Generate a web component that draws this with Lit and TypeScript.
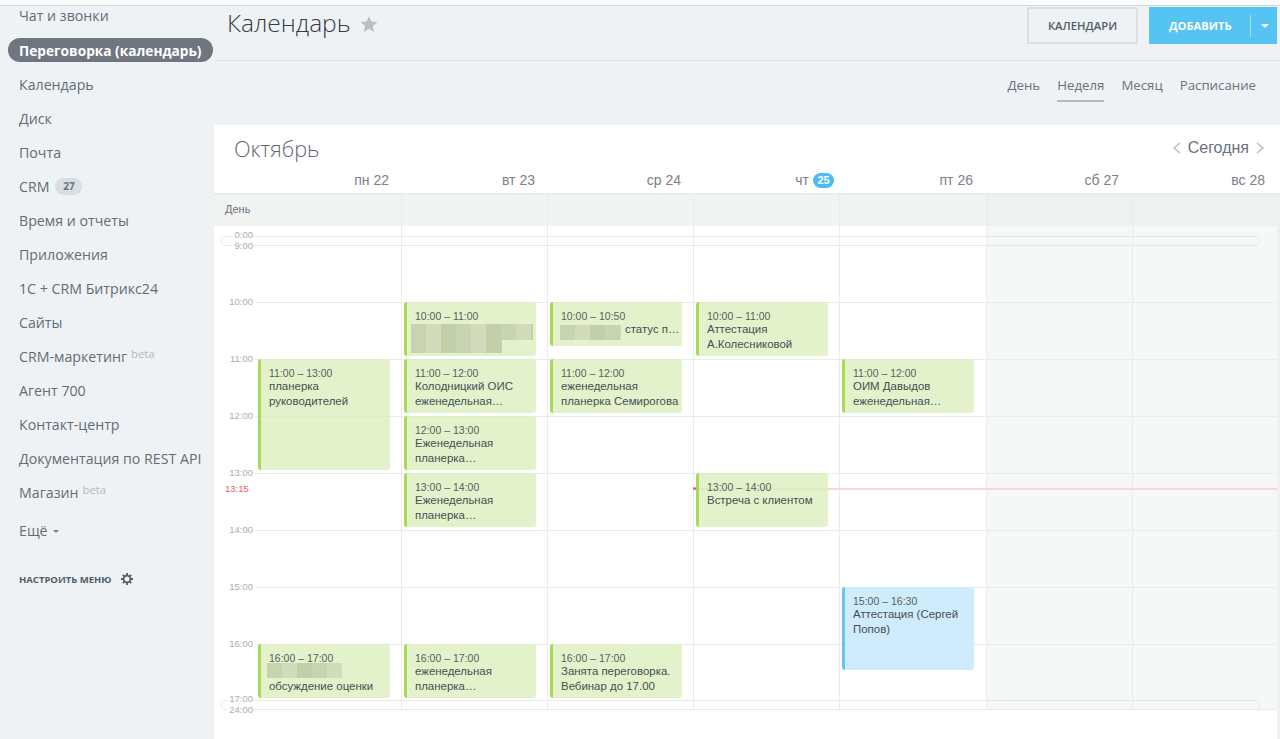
import { LitElement, html, css } from "lit";
import { customElement } from "lit/decorators.js";

const COL0 = 41;
const COLW = 146;

type Ev = { c: number; t: number; h: number; time: string; text: string[]; blue?: boolean; indent?: number; blur?: number[][] };
const events: Ev[] = [
  { c: 0, t: 164, h: 111, time: "11:00 – 13:00", text: ["планерка", "руководителей"] },
  { c: 1, t: 107, h: 54, time: "10:00 – 11:00", text: [], blur: [[4, 22, 122, 16], [4, 38, 91, 13]] },
  { c: 1, t: 164, h: 54, time: "11:00 – 12:00", text: ["Колодницкий ОИС", "еженедельная…"] },
  { c: 1, t: 221, h: 54, time: "12:00 – 13:00", text: ["Еженедельная", "планерка…"] },
  { c: 1, t: 278, h: 54, time: "13:00 – 14:00", text: ["Еженедельная", "планерка…"] },
  { c: 1, t: 449, h: 54, time: "16:00 – 17:00", text: ["еженедельная", "планерка…"] },
  { c: 2, t: 107, h: 44, time: "10:00 – 10:50", text: ["статус п…"], indent: 64, blur: [[7, 23, 61, 15]] },
  { c: 2, t: 164, h: 54, time: "11:00 – 12:00", text: ["еженедельная", "планерка Семирогова"] },
  { c: 2, t: 449, h: 54, time: "16:00 – 17:00", text: ["Занята переговорка.", "Вебинар до 17.00"] },
  { c: 3, t: 107, h: 54, time: "10:00 – 11:00", text: ["Аттестация", "А.Колесниковой"] },
  { c: 3, t: 278, h: 54, time: "13:00 – 14:00", text: ["Встреча с клиентом"] },
  { c: 4, t: 164, h: 54, time: "11:00 – 12:00", text: ["ОИМ Давыдов", "еженедельная…"] },
  { c: 4, t: 392, h: 83, time: "15:00 – 16:30", text: ["Аттестация (Сергей", "Попов)"], blue: true },
  { c: 0, t: 449, h: 54, time: "16:00 – 17:00", text: ["\u00a0", "обсуждение оценки"], blur: [[6, 19, 75, 15]] },
];

const labels: [string, number][] = [
  ["0:00", 40], ["9:00", 51], ["10:00", 107], ["11:00", 164], ["12:00", 221],
  ["13:00", 278], ["14:00", 335], ["15:00", 392], ["16:00", 449], ["17:00", 504], ["24:00", 515],
];
const lines = [107, 164, 221, 278, 335, 392, 449, 514];

const days = [
  { l: "пн 22" }, { l: "вт 23" }, { l: "ср 24" }, { l: "чт", today: "25" },
  { l: "пт 26" }, { l: "сб 27" }, { l: "вс 28" },
];

const menu: { t: string; badge?: string; sup?: string }[] = [
  { t: "Календарь" }, { t: "Диск" }, { t: "Почта" }, { t: "CRM", badge: "27" },
  { t: "Время и отчеты" }, { t: "Приложения" }, { t: "1С + CRM Битрикс24" }, { t: "Сайты" },
  { t: "CRM-маркетинг", sup: "beta" }, { t: "Агент 700" }, { t: "Контакт-центр" },
  { t: "Документация по REST API" }, { t: "Магазин", sup: "beta" },
];

@customElement("app-root")
export class AppRoot extends LitElement {
  static styles = css`
    :host { display: block; width: 1280px; height: 739px; overflow: hidden; background: #eef2f4;
      font-family: "Open Sans", "Noto Sans", sans-serif; color: #535c69; }
    * { box-sizing: border-box; }
    .topline { height: 6px; background: #fafbfb; border-bottom: 1px solid #d5d8da; }
    .page { display: flex; height: 733px; }
    .side { width: 214px; flex: none; }
    .item { height: 34px; display: flex; align-items: center; padding-left: 19px; font-size: 14.2px; color: #656c75; white-space: nowrap; }
    .first { height: 20px; margin-top: -1px; }
    .active { margin: 13px 0 5px 8px; width: 205px; height: 24px; padding-left: 11px; border-radius: 12px; background: #6f7680; color: #fff; font-weight: 700; font-size: 13.7px; }
    .cnt { margin-left: 6px; width: 27px; height: 17px; border-radius: 9px; background: #d9dee2; color: #6b7480; font-size: 10px; font-weight: 700; text-align: center; line-height: 17px; }
    .sup { margin: -6px 0 0 4px; font-size: 11.3px; color: #b4b9bf; }
    .more { height: 42px; }
    .caret { margin: 2px 0 0 5px; width: 0; height: 0; border: 3px solid transparent; border-top: 3px solid #7a818a; border-bottom: 0; }
    .setup { margin: 16px 0 0 19px; display: flex; align-items: center; height: 24px; gap: 10px; font-size: 9.5px; font-weight: 700; color: #535c69; }
    .main { width: 1066px; flex: none; display: flex; flex-direction: column; }
    .head { height: 55px; display: flex; align-items: flex-start; border-bottom: 1px solid #dfe3e6; padding: 0 0 0 13px; }
    .title { font-size: 24.5px; line-height: 34px; color: #333b47; font-weight: 300; }
    .star { margin: 9px 0 0 9px; }
    .spacer { flex: 1; }
    .btn-cal { width: 111px; height: 37px; margin: 1px 11px 0 0; border: 2px solid #dcdfe2; border-radius: 2px; display: flex; align-items: center; justify-content: center; font-size: 11.3px; font-weight: 600; color: #535c69; }
    .btn-add { width: 128px; height: 37px; margin: 1px 3px 0 0; background: #56c4f3; display: flex; align-items: center; color: #fff; font-size: 11.2px; font-weight: 700; padding-left: 20px; }
    .btn-add i { margin-left: 18px; width: 1px; height: 22px; background: #a9e1f8; }
    .btn-add b { margin-left: 10px; border: 4px solid transparent; border-top: 4px solid #fff; border-bottom: 0; }
    .views { height: 64px; display: flex; justify-content: flex-end; align-items: flex-start; gap: 17px; padding: 15px 24px 0 0; font-size: 13.25px; color: #6b727c; }
    .views span { height: 26px; line-height: 18px; }
    .views .on { border-bottom: 2px solid #b4b9bf; }
    .cal { flex: 1; background: #fff; display: flex; flex-direction: column; }
    .calhead { height: 45px; display: flex; align-items: center; padding: 1px 15px 0 20px; }
    .month { font-size: 21.7px; color: #5f6670; font-weight: 300; }
    .today-nav { display: flex; align-items: center; gap: 7px; margin-top: -1px; font-family: "Liberation Sans", Arial, sans-serif; font-size: 16px; color: #6b727c; }
    .dayrow { height: 25px; display: grid; grid-template-columns: repeat(7, 146px); padding-left: 41px; border-bottom: 2px solid #eaedee; }
    .day { font-family: "Liberation Sans", Arial, sans-serif; font-size: 14px; color: #7b8087; padding: 2px 12px 0 0; display: flex; justify-content: flex-end; align-items: flex-start; gap: 4px; }
    .day.now-day { padding-right: 5px; }
    .badge { background: #49bdf0; color: #fff; font-size: 11px; font-weight: 700; height: 15px; width: 21px; margin-top: 1px; border-radius: 8px; text-align: center; line-height: 15px; }
    .gridwrap { flex: 1; border-right: 3px solid #eef0f2; }
    .grid { position: relative; height: 515px; }
    .allday { position: absolute; left: 0; right: 0; top: 0; height: 31px; background: #f2f3f3; font-family: "Liberation Sans", Arial, sans-serif; font-size: 11px; color: #6b727c; padding: 8px 0 0 11px; }
    .weekend { position: absolute; left: 772px; right: 0; top: 0; height: 515px; background: rgba(236,240,240,.45); }
    .vline { position: absolute; top: 0; height: 515px; width: 1px; background: #e9ebed; }
    .hline { position: absolute; left: 41px; right: 0; height: 1px; background: #e9ebed; }
    .hlabel { position: absolute; right: calc(100% - 39px); padding-left: 2px; background: #fff; white-space: nowrap; font-family: "Liberation Sans", Arial, sans-serif; font-size: 9.5px; line-height: 11px; color: #a8adb3; }
    .collapse { position: absolute; left: 7px; width: 1039px; height: 10px; border: 1px solid #e6e8ea; border-radius: 5px; }
    .now { position: absolute; left: 481px; right: 0; top: 293px; height: 2px; background: #fdd5d5; }
    .nowdot { position: absolute; left: 479px; top: 292px; width: 3px; height: 3px; border-radius: 2px; background: #f0525a; }
    .nowlabel { position: absolute; left: 11px; top: 288px; font-family: "Liberation Sans", Arial, sans-serif; font-size: 9.5px; line-height: 11px; color: #f0606a; }
    .ev { position: absolute; width: 132px; background: rgba(218,237,184,.75); border-left: 3px solid #a9da55; border-radius: 3px; padding: 8px 2px 0 8px; font-family: "Liberation Sans", Arial, sans-serif; font-size: 11.45px; line-height: 15px; color: #484e54; overflow: hidden; white-space: nowrap; }
    .ev.blue { background: #ceecfb; border-left-color: #6cc3ee; }
    .ev .t { line-height: 12px; color: #5a6060; font-size: 10.5px; }
    .ev .blur { position: absolute; filter: blur(.6px); background: repeating-linear-gradient(90deg, #c8d4b0 0 15px, #d2dcbc 15px 30px, #c3cfa9 30px 45px); }
  `;

  render() {
    return html`
      <div class="topline"></div>
      <div class="page">
        <nav class="side">
          <div class="item first">Чат и звонки</div>
          <div class="item active">Переговорка (календарь)</div>
          ${menu.map(m => html`<div class="item">${m.t}
            ${m.badge ? html`<span class="cnt">${m.badge}</span>` : ""}
            ${m.sup ? html`<span class="sup">${m.sup}</span>` : ""}</div>`)}
          <div class="item more">Ещё<span class="caret"></span></div>
          <div class="setup">НАСТРОИТЬ МЕНЮ
            <svg width="12" height="12" viewBox="0 0 12 12"><g fill="none" stroke="#535c69"><circle cx="6" cy="6" r="3.4" stroke-width="1.8"/><path stroke-width="1.8" d="M6 0v2.2M6 9.8V12M0 6h2.2M9.8 6H12M1.8 1.8l1.5 1.5M8.7 8.7l1.5 1.5M1.8 10.2l1.5-1.5M8.7 3.3l1.5-1.5"/></g></svg>
          </div>
        </nav>
        <main class="main">
          <div class="head">
            <div class="title">Календарь</div>
            <svg class="star" width="18" height="18" viewBox="0 0 18 18"><path fill="#bcc0c5" d="M9 1l2.4 5.6 6.1.5-4.6 4 1.4 5.9L9 13.9 3.7 17l1.4-5.9-4.6-4 6.1-.5z"/></svg>
            <div class="spacer"></div>
            <div class="btn-cal">КАЛЕНДАРИ</div>
            <div class="btn-add">ДОБАВИТЬ<i></i><b></b></div>
          </div>
          <div class="views"><span>День</span><span class="on">Неделя</span><span>Месяц</span><span>Расписание</span></div>
          <section class="cal">
            <div class="calhead">
              <div class="month">Октябрь</div>
              <div class="spacer"></div>
              <div class="today-nav">
                <svg width="9" height="14" viewBox="0 0 9 14"><path d="M8 2L2 7l6 5" fill="none" stroke="#b4b9bf" stroke-width="1.3"/></svg>
                Сегодня
                <svg width="9" height="14" viewBox="0 0 9 14"><path d="M1 2l6 5-6 5" fill="none" stroke="#b4b9bf" stroke-width="1.3"/></svg>
              </div>
            </div>
            <div class="dayrow">
              ${days.map(d => html`<div class="day ${d.today ? "now-day" : ""}">${d.l}${d.today ? html`<span class="badge">${d.today}</span>` : ""}</div>`)}
            </div>
            <div class="gridwrap">
              <div class="grid">
                <div class="allday">День</div>
                <div class="weekend"></div>
                ${[1, 2, 3, 4, 5, 6].map(i => html`<div class="vline" style="left:${Math.floor(COL0 + 146.2 * i)}px"></div>`)}
                ${lines.map(y => html`<div class="hline" style="top:${y}px"></div>`)}
                <div class="collapse" style="top:41px"></div>
                <div class="collapse" style="top:505px"></div>
                ${labels.map(([l, y]) => html`<div class="hlabel" style="top:${y - 6}px">${l}</div>`)}
                <div class="now"></div>
                <div class="nowdot"></div>
                <div class="nowlabel">13:15</div>
                ${events.map(e => html`<div class="ev ${e.blue ? "blue" : ""}" style="left:${COL0 + COLW * e.c + 3}px;top:${e.t}px;height:${e.h}px">
                  ${(e.blur || []).map(b => html`<span class="blur" style="left:${b[0]}px;top:${b[1]}px;width:${b[2]}px;height:${b[3]}px"></span>`)}
                  <div class="t">${e.time}</div>
                  ${e.text.map(t => html`<div style="margin-left:${e.indent ?? 0}px">${t}</div>`)}
                </div>`)}
              </div>
            </div>
          </section>
        </main>
      </div>
    `;
  }
}
